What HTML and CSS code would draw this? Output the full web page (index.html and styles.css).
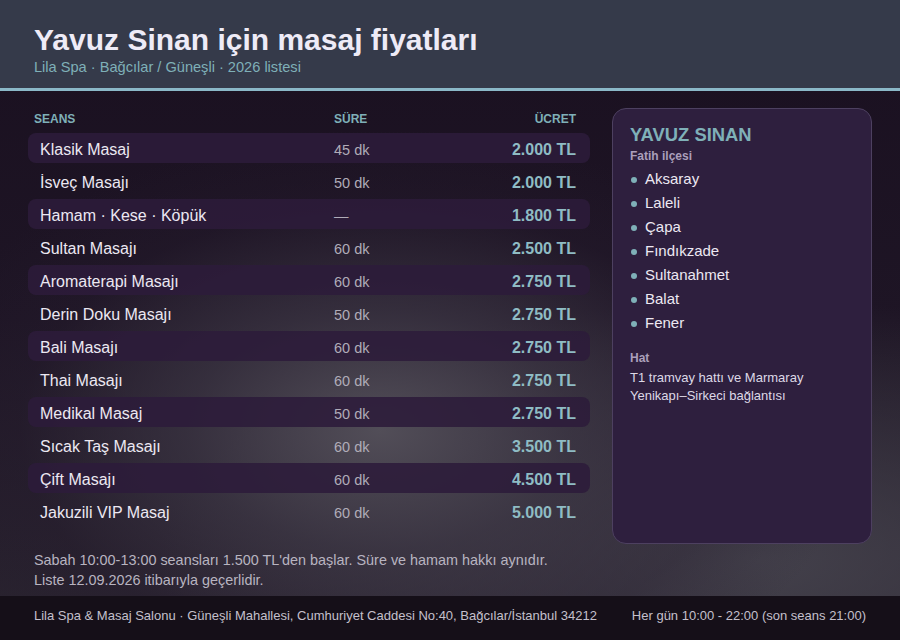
FILE: index.html
```html
<!DOCTYPE html>
<html lang="tr">
<head>
<meta charset="utf-8">
<title>Yavuz Sinan için masaj fiyatları</title>
<link rel="stylesheet" href="styles.css">
</head>
<body>
<div class="page">
  <header class="header">
    <h1 class="title">Yavuz Sinan için masaj fiyatları</h1>
    <div class="subtitle">Lila Spa · Bağcılar / Güneşli · 2026 listesi</div>
  </header>
  <main class="main">
    <section class="prices">
      <div class="row head">
        <span>SEANS</span><span>SÜRE</span><span class="r">ÜCRET</span>
      </div>
      <div class="row alt"><span class="name">Klasik Masaj</span><span class="dur">45 dk</span><span class="price">2.000 TL</span></div>
      <div class="row"><span class="name">İsveç Masajı</span><span class="dur">50 dk</span><span class="price">2.000 TL</span></div>
      <div class="row alt"><span class="name">Hamam · Kese · Köpük</span><span class="dur">—</span><span class="price">1.800 TL</span></div>
      <div class="row"><span class="name">Sultan Masajı</span><span class="dur">60 dk</span><span class="price">2.500 TL</span></div>
      <div class="row alt"><span class="name">Aromaterapi Masajı</span><span class="dur">60 dk</span><span class="price">2.750 TL</span></div>
      <div class="row"><span class="name">Derin Doku Masajı</span><span class="dur">50 dk</span><span class="price">2.750 TL</span></div>
      <div class="row alt"><span class="name">Bali Masajı</span><span class="dur">60 dk</span><span class="price">2.750 TL</span></div>
      <div class="row"><span class="name">Thai Masajı</span><span class="dur">60 dk</span><span class="price">2.750 TL</span></div>
      <div class="row alt"><span class="name">Medikal Masaj</span><span class="dur">50 dk</span><span class="price">2.750 TL</span></div>
      <div class="row"><span class="name">Sıcak Taş Masajı</span><span class="dur">60 dk</span><span class="price">3.500 TL</span></div>
      <div class="row alt"><span class="name">Çift Masajı</span><span class="dur">60 dk</span><span class="price">4.500 TL</span></div>
      <div class="row"><span class="name">Jakuzili VIP Masaj</span><span class="dur">60 dk</span><span class="price">5.000 TL</span></div>
    </section>
    <aside class="card">
      <div class="card-title">YAVUZ SINAN</div>
      <div class="card-label">Fatih ilçesi</div>
      <ul class="places">
        <li>Aksaray</li>
        <li>Laleli</li>
        <li>Çapa</li>
        <li>Fındıkzade</li>
        <li>Sultanahmet</li>
        <li>Balat</li>
        <li>Fener</li>
      </ul>
      <div class="card-label hat">Hat</div>
      <p class="card-text">T1 tramvay hattı ve Marmaray Yenikapı–Sirkeci bağlantısı</p>
    </aside>
  </main>
  <div class="notes">
    <p>Sabah 10:00-13:00 seansları 1.500 TL'den başlar. Süre ve hamam hakkı aynıdır.</p>
    <p>Liste 12.09.2026 itibarıyla geçerlidir.</p>
  </div>
  <footer class="footer">
    <span>Lila Spa &amp; Masaj Salonu · Güneşli Mahallesi, Cumhuriyet Caddesi No:40, Bağcılar/İstanbul 34212</span>
    <span>Her gün 10:00 - 22:00 (son seans 21:00)</span>
  </footer>
</div>
</body>
</html>
```

FILE: styles.css
```css
* { box-sizing: border-box; }
html, body { margin: 0; padding: 0; }
body {
  width: 900px;
  height: 640px;
  overflow: hidden;
  font-family: "Liberation Sans", Arial, sans-serif;
  background: #1a1020;
}
.page {
  width: 900px;
  height: 640px;
  display: flex;
  flex-direction: column;
  background:
    radial-gradient(ellipse 480px 300px at 380px 430px, rgba(84, 80, 90, 0.95) 0%, rgba(62, 56, 70, 0.7) 40%, rgba(40, 30, 48, 0.3) 75%, rgba(26, 16, 32, 0) 100%),
    radial-gradient(ellipse 600px 260px at 760px 560px, rgba(72, 70, 80, 0.85) 0%, rgba(40, 34, 48, 0) 100%),
    linear-gradient(180deg, #1a1020 0%, #1e1525 50%, #2a2430 100%);
}
.header {
  height: 91px;
  background: #353a4a;
  border-bottom: 3px solid #8bb8c8;
  padding: 22px 34px 0;
}
.title {
  margin: 0;
  font-size: 30px;
  line-height: 35px;
  font-weight: bold;
  color: #eeebf7;
}
.subtitle {
  margin-top: 1px;
  font-size: 14.6px;
  line-height: 18px;
  color: #7fb0b8;
}
.main {
  display: flex;
  gap: 22px;
  padding: 17px 28px 0 28px;
  height: 453px;
}
.prices {
  width: 562px;
  display: flex;
  flex-direction: column;
  gap: 3px;
}
.row {
  display: grid;
  grid-template-columns: 294px 1fr auto;
  align-items: center;
  height: 30px;
  padding: 3px 14px 0 12px;
  border-radius: 8px;
}
.row.alt { background: rgba(44, 27, 58, 0.88); }
.row.head {
  height: 20px;
  margin-bottom: 2px;
  padding: 1px 14px 0 6px;
  grid-template-columns: 300px 1fr auto;
  font-size: 12px;
  font-weight: bold;
  color: #7fb0b8;
}
.r { text-align: right; }
.name { font-size: 16px; color: #ece8f2; }
.dur { font-size: 14.5px; color: #b0acb8; }
.price { font-size: 16px; font-weight: bold; color: #8fbcc4; text-align: right; }
.card {
  width: 260px;
  height: 436px;
  background: #2e1f3e;
  border: 1px solid #4d4060;
  border-radius: 14px;
  padding: 16px 17px;
}
.card-title {
  font-size: 18.4px;
  font-weight: bold;
  color: #7fb0b8;
  line-height: 20px;
}
.card-label {
  font-size: 12px;
  font-weight: bold;
  color: #ab9fbb;
  line-height: 16px;
  margin-top: 3px;
}
.card-label.hat { margin-top: 15px; }
.places {
  list-style: none;
  margin: 3px 0 0;
  padding: 0;
}
.places li {
  display: flex;
  align-items: center;
  gap: 8px;
  font-size: 15px;
  line-height: 24px;
  color: #ece8f2;
}
.places li::before {
  content: "";
  width: 6px;
  height: 6px;
  border-radius: 50%;
  background: #7fb0b8;
  margin-left: 1px;
  margin-top: 2px;
}
.card-text {
  margin: 3px 0 0;
  font-size: 13px;
  line-height: 18px;
  color: #ddd8e6;
}
.notes {
  height: 52px;
  padding: 6px 34px 0;
  font-size: 14.4px;
  line-height: 20px;
  color: #b8b4c0;
}
.notes p { margin: 0; }
.footer {
  flex: 1;
  background: #150f18;
  display: flex;
  justify-content: space-between;
  align-items: flex-start;
  padding: 11px 34px 0;
  font-size: 13px;
  line-height: 18px;
  color: #c4c0cc;
}
```
